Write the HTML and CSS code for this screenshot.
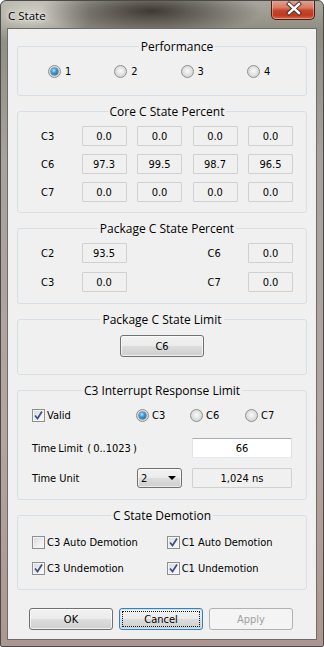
FILE: index.html
```html
<!DOCTYPE html>
<html lang="en">

<head>
    <meta charset="utf-8">
    <meta name="viewport" content="width=device-width, initial-scale=1.0">
    <title>C State</title>
    <link rel="stylesheet" href="styles.css">
</head>

<body>

    <div class="window">

        <div class="titlebar">
            <span class="title">C State</span>
            <span class="close">
                <svg width="44" height="20" viewBox="0 0 44 20">
                    <path d="M17 5 L27 14 M27 5 L17 14" stroke="#3a2a28" stroke-width="4.2" stroke-linecap="square" fill="none"/>
                    <path d="M17 5 L27 14 M27 5 L17 14" stroke="#ffffff" stroke-width="2.4" stroke-linecap="square" fill="none"/>
                </svg>
            </span>
        </div>

        <div class="client">

            <fieldset class="group g-perf">
                <legend>Performance</legend>
                <div class="perf">
                    <label class="opt"><span class="radio on"></span>1</label>
                    <label class="opt"><span class="radio"></span>2</label>
                    <label class="opt"><span class="radio"></span>3</label>
                    <label class="opt"><span class="radio"></span>4</label>
                </div>
            </fieldset>

            <fieldset class="group g-core">
                <legend>Core C State Percent</legend>
                <div class="pct">
                    <span>C3</span>
                    <span class="ro">0.0</span>
                    <span class="ro">0.0</span>
                    <span class="ro">0.0</span>
                    <span class="ro">0.0</span>

                    <span>C6</span>
                    <span class="ro">97.3</span>
                    <span class="ro">99.5</span>
                    <span class="ro">98.7</span>
                    <span class="ro">96.5</span>

                    <span>C7</span>
                    <span class="ro">0.0</span>
                    <span class="ro">0.0</span>
                    <span class="ro">0.0</span>
                    <span class="ro">0.0</span>
                </div>
            </fieldset>

            <fieldset class="group g-pkg">
                <legend>Package C State Percent</legend>
                <div class="pkg">
                    <span>C2</span>
                    <span class="ro">93.5</span>
                    <span></span>
                    <span>C6</span>
                    <span class="ro">0.0</span>

                    <span>C3</span>
                    <span class="ro">0.0</span>
                    <span></span>
                    <span>C7</span>
                    <span class="ro">0.0</span>
                </div>
            </fieldset>

            <fieldset class="group g-limit">
                <legend>Package C State Limit</legend>
                <div class="center">
                    <button class="btn">C6</button>
                </div>
            </fieldset>

            <fieldset class="group g-irl">
                <legend>C3 Interrupt Response Limit</legend>
                <div class="irl-top">
                    <label class="opt"><span class="check on"><svg width="11" height="11" viewBox="0 0 11 11"><path d="M2 5.5 L4.5 8.5 L9 1.5" stroke="#3d4f85" stroke-width="1.7" fill="none"/></svg></span>Valid</label>
                    <label class="opt"><span class="radio on"></span>C3</label>
                    <label class="opt"><span class="radio"></span>C6</label>
                    <label class="opt"><span class="radio"></span>C7</label>
                </div>
                <div class="irl-grid">
                    <span class="span2">Time Limit&nbsp;&nbsp;( 0..1023 )</span>
                    <span class="edit">66</span>

                    <span>Time Unit</span>
                    <span class="combo">2<i class="arrow"></i></span>
                    <span class="ro">1,024 ns</span>
                </div>
            </fieldset>

            <fieldset class="group g-dem">
                <legend>C State Demotion</legend>
                <div class="dem">
                    <label class="opt"><span class="check"></span>C3 Auto Demotion</label>
                    <label class="opt"><span class="check on"><svg width="11" height="11" viewBox="0 0 11 11"><path d="M2 5.5 L4.5 8.5 L9 1.5" stroke="#3d4f85" stroke-width="1.7" fill="none"/></svg></span>C1 Auto Demotion</label>
                    <label class="opt"><span class="check on"><svg width="11" height="11" viewBox="0 0 11 11"><path d="M2 5.5 L4.5 8.5 L9 1.5" stroke="#3d4f85" stroke-width="1.7" fill="none"/></svg></span>C3 Undemotion</label>
                    <label class="opt"><span class="check on"><svg width="11" height="11" viewBox="0 0 11 11"><path d="M2 5.5 L4.5 8.5 L9 1.5" stroke="#3d4f85" stroke-width="1.7" fill="none"/></svg></span>C1 Undemotion</label>
                </div>
            </fieldset>

            <div class="buttons">
                <button class="btn">OK</button>
                <button class="btn focus"><span>Cancel</span></button>
                <button class="btn" disabled>Apply</button>
            </div>

        </div>
    </div>

</body>

</html>
```

FILE: styles.css
```css
body {
    margin: 0;
}

.window {
    width: 324px;
    height: 647px;
    box-sizing: border-box;
    border: 1px solid #4a4a48;
    border-radius: 6px 6px 2px 2px;
    background:
        radial-gradient(ellipse 110px 26px at 150px 10px, rgba(45, 40, 34, .85), rgba(45, 40, 34, 0)),
        radial-gradient(ellipse 60px 30px at 30px 14px, rgba(225, 222, 214, .8), rgba(225, 222, 214, 0)),
        linear-gradient(to bottom, #a9a79d 0, #8f8c82 30px, #a8a29c 160px, #b3a5a0 420px, #ae9690 647px);
    overflow: hidden;
}

.titlebar {
    height: 27px;
    display: flex;
    justify-content: space-between;
    align-items: flex-start;
    padding: 0 8px 0 7px;
}

.title {
    font-family: "Open Sans", sans-serif;
    font-size: 11.5px;
    line-height: 29px;
    color: #000;
    text-shadow: 0 0 6px rgba(255, 255, 255, .9), 0 0 3px rgba(255, 255, 255, .9);
}

.close {
    display: block;
    width: 44px;
    height: 20px;
    margin-top: -1px;
    box-sizing: border-box;
    border: 1px solid #4a1c14;
    border-top: none;
    border-radius: 0 0 5px 5px;
    background: linear-gradient(to bottom, #e4a595 0, #d77a62 40%, #c4452c 55%, #c0391f 80%, #d8664a 100%);
    box-shadow: inset 0 0 0 1px rgba(255, 210, 200, .45);
}

.close svg {
    display: block;
    margin-top: -1px;
}

.client {
    margin: 0 6px;
    height: 612px;
    box-sizing: border-box;
    border: 1px solid #6f6c68;
    background-color: #f0f0f0;
    padding-top: 10px;
    font-family: "DejaVu Sans Condensed", "DejaVu Sans", sans-serif;
    font-stretch: condensed;
    font-size: 11px;
    color: #000;
}

.group {
    box-sizing: border-box;
    min-width: 0;
    margin: 0 9px 8px;
    padding: 0;
    border: 1px solid #d5dfe5;
    border-radius: 3px;
}

.group legend {
    margin: 0 auto;
    padding: 0 2px;
    font-family: "Open Sans", sans-serif;
    font-stretch: normal;
    font-size: 12px;
    line-height: 15px;
}

.opt {
    display: flex;
    align-items: center;
    gap: 4px;
    height: 20px;
    white-space: nowrap;
}

.radio {
    position: relative;
    width: 13px;
    height: 13px;
    box-sizing: border-box;
    border-radius: 50%;
    border: 1px solid #8d8e8e;
    background: radial-gradient(circle at 50% 45%, #fbfbfb 0, #e3e3e3 45%, #c9c9c9 100%);
    flex: none;
}

.radio.on::after {
    content: "";
    position: absolute;
    left: 2px;
    top: 2px;
    width: 7px;
    height: 7px;
    border-radius: 50%;
    background: radial-gradient(circle at 40% 35%, #b6e4fb 0, #3d9ad8 40%, #0f5590 100%);
    box-shadow: 0 0 0 .5px #2a4f78;
}

.check {
    display: flex;
    align-items: center;
    justify-content: center;
    width: 13px;
    height: 13px;
    box-sizing: border-box;
    border: 1px solid #8e8f8f;
    background: linear-gradient(135deg, #d9d9d9 0, #f0f0f0 60%, #fafafa 100%);
    box-shadow: inset 0 0 0 1px #f4f4f4;
    flex: none;
}

.opt .check {
    margin-right: -1px;
}

.ro {
    display: flex;
    align-items: center;
    justify-content: center;
    height: 20px;
    box-sizing: border-box;
    border: 1px solid #d0d0d0;
    border-radius: 1px;
    background-color: #f0f0f0;
}

/* performance */

.g-perf {
    height: 57px;
    padding: 7px 0 0 30px;
}

.perf {
    display: grid;
    grid-template-columns: repeat(4, 66.3px);
}

/* core / package percent */

.g-core {
    height: 109px;
    padding: 7px 13px 0 23px;
}

.pct {
    display: grid;
    grid-template-columns: 30px repeat(4, 45px);
    column-gap: 10.5px;
    row-gap: 8px;
    align-items: center;
}

.g-pkg {
    height: 83px;
    padding: 7px 13px 0 23px;
}

.pkg {
    display: grid;
    grid-template-columns: 30px 45px 1fr 30px 45px;
    column-gap: 10.5px;
    row-gap: 9px;
    align-items: center;
}

/* limit */

.g-limit {
    height: 63px;
    padding: 8px 0 0;
}

.center {
    display: flex;
    justify-content: center;
}

/* interrupt response */

.g-irl {
    height: 117px;
    padding: 7px 14px 0;
}

.irl-top {
    display: grid;
    grid-template-columns: 104px 54px 55px auto;
}

.irl-top .opt {
    gap: 3px;
}

.irl-grid {
    display: grid;
    grid-template-columns: 105px 55px 100px;
    row-gap: 10px;
    margin-top: 13px;
    align-items: center;
}

.span2 {
    grid-column: span 2;
    word-spacing: -1px;
}

.edit {
    display: flex;
    align-items: center;
    justify-content: center;
    height: 20px;
    box-sizing: border-box;
    border: 1px solid;
    border-color: #abadb3 #dbdfe6 #e3e9ef #e2e3ea;
    background-color: #fff;
}

.combo {
    position: relative;
    display: flex;
    align-items: center;
    width: 45px;
    height: 20px;
    box-sizing: border-box;
    padding-left: 3px;
    border: 1px solid #707070;
    border-radius: 3px;
    background: linear-gradient(to bottom, #f2f2f2 0, #ebebeb 50%, #dddddd 50%, #cfcfcf 100%);
    box-shadow: inset 0 0 0 1px rgba(255, 255, 255, .6);
}

.arrow {
    position: absolute;
    right: 5px;
    top: 7px;
    width: 0;
    height: 0;
    border-left: 4px solid transparent;
    border-right: 4px solid transparent;
    border-top: 4px solid #000;
}

/* demotion */

.g-dem {
    height: 82px;
    padding: 9px 14px 0;
}

.dem {
    display: grid;
    grid-template-columns: 134.7px auto;
    row-gap: 6.5px;
}

.dem .opt {
    gap: 3px;
}

/* buttons */

.btn {
    width: 84px;
    height: 22px;
    box-sizing: border-box;
    padding: 0;
    border: 1px solid #707070;
    border-radius: 3px;
    background: linear-gradient(to bottom, #f2f2f2 0, #ebebeb 50%, #dddddd 50%, #cfcfcf 100%);
    box-shadow: inset 0 0 0 1px rgba(255, 255, 255, .7);
    font-family: "DejaVu Sans Condensed", "DejaVu Sans", sans-serif;
    font-stretch: condensed;
    font-size: 11px;
    color: #000;
}

.btn.focus {
    padding: 2px;
    border-color: #3c7fb1;
    background: linear-gradient(to bottom, #eaf6fd 0, #d9f0fc 50%, #bee6fd 50%, #a7d9f5 100%);
    box-shadow: inset 0 0 0 1px #c4e5f6;
    background: linear-gradient(to bottom, #f2f2f2 0, #ebebeb 50%, #dddddd 50%, #cfcfcf 100%);
}

.btn.focus span {
    display: flex;
    align-items: center;
    justify-content: center;
    width: 100%;
    height: 100%;
    box-sizing: border-box;
    border: 1px dotted #1a1a1a;
}

.btn:disabled {
    border-color: #adb2b5;
    background: #f4f4f4;
    box-shadow: none;
    color: #a0a0a0;
}

.buttons {
    display: flex;
    gap: 6px;
    padding-left: 21px;
    margin-top: 18px;
}
```
